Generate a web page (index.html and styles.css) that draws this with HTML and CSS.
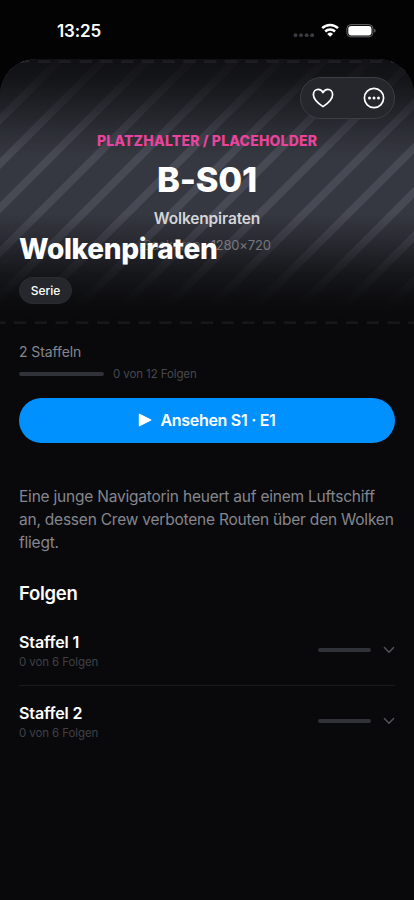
FILE: index.html
```html
<!DOCTYPE html>
<html lang="de">
<head>
<meta charset="utf-8">
<meta name="viewport" content="width=device-width, initial-scale=1">
<title>Wolkenpiraten</title>
<link rel="stylesheet" href="styles.css">
</head>
<body>
<div class="phone">
  <header class="status">
    <span class="clock">13:25</span>
    <svg class="indicators" width="84" height="16" viewBox="0 0 84 16">
      <g fill="#3b3c43"><circle cx="3.5" cy="12.2" r="1.9"/><circle cx="9" cy="12.2" r="1.9"/><circle cx="14.6" cy="12.2" r="1.9"/><circle cx="20.2" cy="12.2" r="1.9"/></g>
      <g fill="none" stroke="#fff" stroke-width="2.5"><path d="M30.2 5.2a11.4 11.4 0 0 1 15.8 0"/><path d="M33.2 8.5a7 7 0 0 1 9.8 0"/></g>
      <path d="M35.2 10.9a4.2 4.2 0 0 1 5.8 0L38.1 13.8z" fill="#fff"/>
      <rect x="54.9" y="1.6" width="26" height="12.2" rx="4" fill="none" stroke="#66676c"/>
      <rect x="56.3" y="3" width="23.2" height="9.4" rx="2.8" fill="#fff"/>
      <path d="M82.2 5.7q1.4.6 1.4 2t-1.4 2z" fill="#66676c"/>
    </svg>
  </header>
  <main class="sheet">
    <section class="hero">
      <svg class="artwork" width="414" height="266" viewBox="0 0 414 266">
        <defs>
          <linearGradient id="shade" x1="0" y1="0" x2="0" y2="1">
            <stop offset="0" stop-color="#09090b" stop-opacity=".84"/>
            <stop offset=".08" stop-color="#09090b" stop-opacity=".74"/>
            <stop offset=".18" stop-color="#09090b" stop-opacity=".48"/>
            <stop offset=".28" stop-color="#09090b" stop-opacity=".2"/>
            <stop offset=".37" stop-color="#09090b" stop-opacity="0"/>
            <stop offset=".58" stop-color="#09090b" stop-opacity="0"/>
            <stop offset=".68" stop-color="#09090b" stop-opacity=".28"/>
            <stop offset=".8" stop-color="#09090b" stop-opacity=".69"/>
            <stop offset=".9" stop-color="#09090b" stop-opacity=".91"/>
            <stop offset=".95" stop-color="#09090b" stop-opacity=".98"/>
            <stop offset="1" stop-color="#09090b"/>
          </linearGradient>
        </defs>
        <rect width="414" height="266" fill="#363841"/>
        <path d="M10.7 0h11l-266 266h-11zm44.25 0h11l-266 266h-11zm44.25 0h11l-266 266h-11zm44.25 0h11l-266 266h-11zm44.25 0h11l-266 266h-11zm44.25 0h11l-266 266h-11zm44.25 0h11l-266 266h-11zm44.25 0h11l-266 266h-11zm44.25 0h11l-266 266h-11zm44.25 0h11l-266 266h-11zm44.25 0h11l-266 266h-11zm44.25 0h11l-266 266h-11zm44.25 0h11l-266 266h-11zm44.25 0h11l-266 266h-11zm44.25 0h11l-266 266h-11z" fill="#474954"/>
        <path d="M17.3 2.6H414" stroke="#7c7e8a" stroke-width="3" stroke-dasharray="12.3 8.45"/>
        <rect width="414" height="266" fill="url(#shade)"/>
        <path d="M-6.75 263.6H414" stroke="#17171a" stroke-width="2.6" stroke-dasharray="12.3 8.45"/>
      </svg>
      <div class="art-label">
        <span class="art-tag">PLATZHALTER / PLACEHOLDER</span>
        <span class="art-code">B-S01</span>
        <span class="art-name">Wolkenpiraten</span>
        <span class="art-size"><span class="art-kind">Backdrop ·</span> 1280×720</span>
      </div>
      <div class="actions">
        <svg width="22" height="20" viewBox="0 0 22 20" fill="none" stroke="#fff" stroke-width="1.7" stroke-linejoin="round"><path d="M11 18.6C7.4 16.2 1.4 11.8 1.4 6.7 1.4 3.6 3.5 1.4 6.2 1.4c2.2 0 3.8 1.2 4.8 3.2 1-2 2.6-3.2 4.8-3.2 2.7 0 4.8 2.2 4.8 5.3 0 5.1-6 9.5-9.6 11.9z"/></svg>
        <svg width="22" height="22" viewBox="0 0 22 22"><circle cx="11" cy="11" r="9.6" fill="none" stroke="#fff" stroke-width="1.7"/><g fill="#fff"><circle cx="6.5" cy="11" r="1.5"/><circle cx="11" cy="11" r="1.5"/><circle cx="15.5" cy="11" r="1.5"/></g></svg>
      </div>
      <div class="heading">
        <h1>Wolkenpiraten</h1>
        <span class="chip">Serie</span>
      </div>
    </section>
    <section class="details">
      <p class="seasons">2 Staffeln</p>
      <div class="progress"><span class="track"></span><span class="count">0 von 12 Folgen</span></div>
      <button class="play"><svg width="14" height="14" viewBox="0 0 14 14"><path d="M1.4 1.2v11.6L12.8 7z" fill="#fff" stroke="#fff" stroke-width="1.2" stroke-linejoin="round"/></svg><span>Ansehen S1 · E1</span></button>
      <p class="summary">Eine junge Navigatorin heuert auf einem Luftschiff<br>an, dessen Crew verbotene Routen über den Wolken<br>fliegt.</p>
      <h2>Folgen</h2>
      <div class="season">
        <div class="season-text"><h3>Staffel 1</h3><p>0 von 6 Folgen</p></div>
        <span class="track short"></span>
        <svg class="chevron" width="12" height="8" viewBox="0 0 12 8"><path d="M1.4 1.5 6 6.2l4.6-4.7"/></svg>
      </div>
      <div class="season">
        <div class="season-text"><h3>Staffel 2</h3><p>0 von 6 Folgen</p></div>
        <span class="track short"></span>
        <svg class="chevron" width="12" height="8" viewBox="0 0 12 8"><path d="M1.4 1.5 6 6.2l4.6-4.7"/></svg>
      </div>
    </section>
  </main>
</div>
</body>
</html>
```
FILE: styles.css
```css
* { box-sizing: border-box; margin: 0; padding: 0; }
body { background: #030303; color: #fff; font-family: Inter, "Liberation Sans", sans-serif; }
svg { display: block; flex: none; }
.phone { width: 414px; height: 900px; overflow: hidden; }
.status { height: 59px; display: flex; justify-content: space-between; align-items: flex-start; padding: 21px 38px 0 57px; }
.clock { font-size: 17px; line-height: 20px; font-weight: 600; letter-spacing: -.1px; }
.indicators { margin-top: 2px; }
.sheet { height: 841px; background: #09090b; border-radius: 36px 36px 0 0; overflow: hidden; }
.hero { position: relative; height: 266px; }
.artwork { position: absolute; top: 0; left: 0; }
.art-label { position: absolute; top: 73px; left: 0; width: 414px; display: flex; flex-direction: column; align-items: center; white-space: nowrap; }
.art-tag { color: #e8449c; font-size: 14px; line-height: 18px; font-weight: 800; letter-spacing: .18px; }
.art-code { font-size: 34.5px; line-height: 42px; font-weight: 800; letter-spacing: -.2px; margin-top: 9px; }
.art-name { color: #d5d5d8; font-size: 15.5px; line-height: 20px; font-weight: 600; margin-top: 8px; letter-spacing: -.15px; }
.art-size { color: #77787e; font-size: 13px; line-height: 18px; margin-top: 7px; letter-spacing: -.2px; }
.art-kind { color: #55575e; }
.actions { position: absolute; top: 18px; right: 19px; width: 95px; height: 42px; border: 1px solid #3c3e45; border-radius: 21px; background: #25272d; display: flex; justify-content: space-between; align-items: center; padding: 0 9px 0 11px; }
.heading { position: absolute; left: 19px; top: 173px; }
h1 { font-size: 28px; line-height: 34px; font-weight: 800; letter-spacing: -.32px; white-space: nowrap; }
.chip { display: flex; align-items: center; justify-content: center; width: 53px; height: 27px; margin-top: 11px; border: 1px solid #2a2c32; border-radius: 14px; background: #25272c; font-size: 12px; font-weight: 500; }
.details { padding: 18px 19px 0; }
.seasons { color: #85868e; font-size: 14px; line-height: 18px; letter-spacing: -.1px; }
.progress { display: flex; align-items: center; gap: 9px; height: 14px; margin-top: 6px; }
.track { display: block; width: 85px; height: 4px; border-radius: 2px; background: #303139; }
.count { color: #47484f; font-size: 11.5px; letter-spacing: -.1px; }
.play { display: flex; width: 376px; height: 45px; margin-top: 17px; border: 0; border-radius: 23px; background: #0091ff; color: #fff; align-items: center; justify-content: center; gap: 8px; padding-bottom: 1px; font: 600 16px/20px Inter, sans-serif; letter-spacing: -.3px; }
.summary { color: #85868e; font-size: 15.5px; line-height: 23px; letter-spacing: -.22px; margin-top: 42px; white-space: nowrap; }
h2 { font-size: 18.5px; line-height: 24px; font-weight: 600; letter-spacing: -.3px; margin-top: 27px; }
.season { display: flex; align-items: center; height: 71px; }
.season + .season { border-top: 1px solid #1a1a1d; }
h2 + .season { height: 70px; margin-top: 10px; }
.season-text { flex: 1; padding-top: 2px; }
h3 { font-size: 16px; line-height: 20px; font-weight: 600; letter-spacing: -.1px; }
.season-text p { color: #3f4047; font-size: 11.5px; line-height: 16px; letter-spacing: -.1px; margin-top: 2px; }
.short { width: 53px; margin-right: 12px; }
.chevron { fill: none; stroke: #54555d; stroke-width: 1.4; stroke-linecap: round; stroke-linejoin: round; }
```
